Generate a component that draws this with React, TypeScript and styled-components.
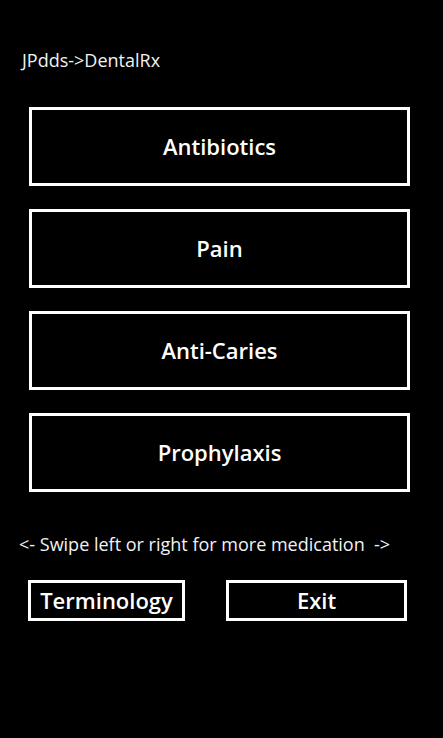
import React from "react";
import styled, { createGlobalStyle } from "styled-components";

const Global = createGlobalStyle`
  html, body { margin: 0; padding: 0; background: #000; }
  body { font-family: "Open Sans", "Noto Sans", sans-serif; color: #fff; }
`;

const Page = styled.div`
  width: 443px;
  height: 738px;
  background: #000;
  display: flex;
  flex-direction: column;
  box-sizing: border-box;
  padding-top: 48px;
`;

const Title = styled.div`
  font-size: 18px;
  line-height: 24px;
  height: 24px;
  padding-left: 22px;
  color: #f2f2f2;
`;

const MenuList = styled.div`
  display: flex;
  flex-direction: column;
  gap: 23px;
  margin-top: 35px;
  padding-left: 29px;
  width: 381px;
`;

const MenuButton = styled.button`
  box-sizing: border-box;
  height: 79px;
  width: 381px;
  background: #000;
  border: 3px solid #fff;
  color: #fff;
  font-family: "Open Sans", "Noto Sans", sans-serif;
  font-weight: 600;
  font-size: 22px;
  display: flex;
  align-items: center;
  justify-content: center;
  padding: 0 0 2px 0;
`;

const Hint = styled.div`
  margin-top: 40px;
  padding-left: 19px;
  font-size: 18px;
  line-height: 24px;
  white-space: pre;
  color: #f2f2f2;
`;

const BottomRow = styled.div`
  display: flex;
  gap: 41px;
  margin-top: 24px;
  padding-left: 28px;
`;

const SmallButton = styled.button<{ $w: number }>`
  box-sizing: border-box;
  width: ${(p) => p.$w}px;
  height: 41px;
  background: #000;
  border: 3px solid #fff;
  color: #fff;
  font-family: "Open Sans", "Noto Sans", sans-serif;
  font-weight: 600;
  font-size: 22px;
  display: flex;
  align-items: center;
  justify-content: center;
  padding: 0 0 2px 0;
  white-space: nowrap;
`;

const items = ["Antibiotics", "Pain", "Anti-Caries", "Prophylaxis"];

export default function App() {
  return (
    <>
      <Global />
      <Page>
        <Title>JPdds-&gt;DentalRx</Title>
        <MenuList>
          {items.map((t) => (
            <MenuButton key={t}>{t}</MenuButton>
          ))}
        </MenuList>
        <Hint>{"<- Swipe left or right for more medication  ->"}</Hint>
        <BottomRow>
          <SmallButton $w={157}>Terminology</SmallButton>
          <SmallButton $w={181}>Exit</SmallButton>
        </BottomRow>
      </Page>
    </>
  );
}
